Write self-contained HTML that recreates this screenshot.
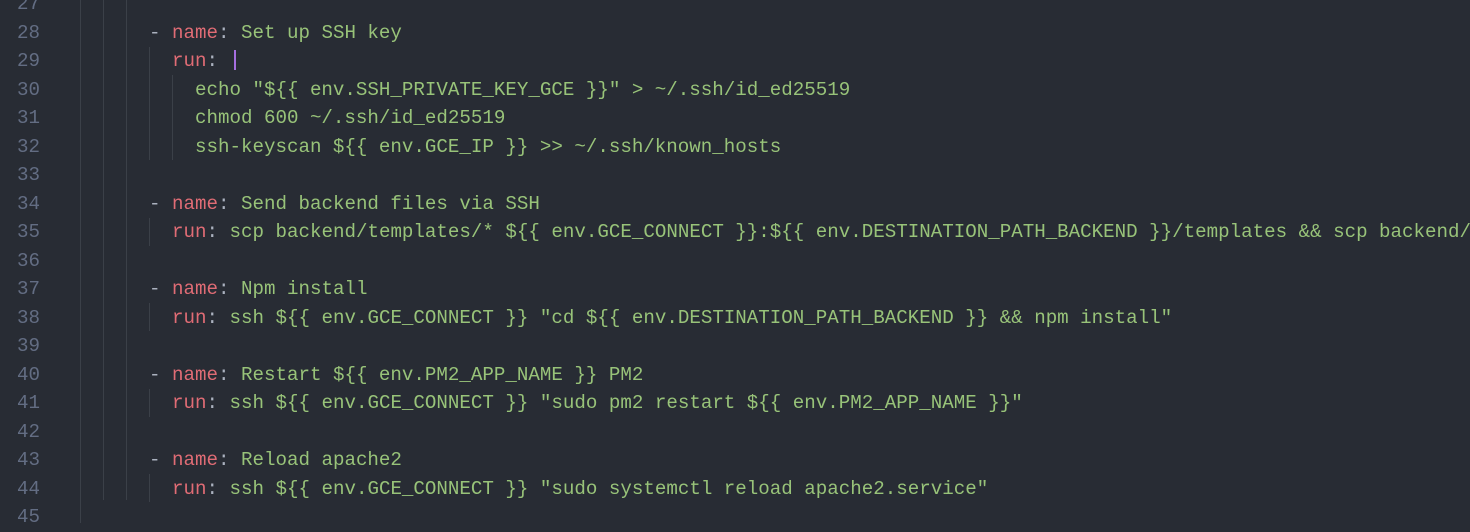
<!DOCTYPE html>
<html><head><style>
body{margin:0;width:1470px;height:523px;overflow:hidden;background:#282c34;font-family:"Liberation Mono",monospace;font-size:19.17px;}
.l{position:absolute;left:0;height:28.5px;line-height:28.5px;white-space:pre;width:1470px;}
.n{position:absolute;right:1430px;color:#636d83;text-align:right;}
.c{position:absolute;left:149px;color:#98c379;}
.k{color:#e06c75}.p{color:#abb2bf}.s{color:#98c379}
.g{position:absolute;width:1px;background:#3b4048;}
</style></head><body>
<div class="g" style="left:80px;top:0;height:523px"></div>
<div class="g" style="left:103px;top:0;height:500px"></div>
<div class="g" style="left:126px;top:0;height:500px"></div>
<div class="g" style="left:149px;top:47px;height:113px"></div>
<div class="g" style="left:172px;top:75px;height:85px"></div>
<div class="g" style="left:149px;top:218px;height:28px"></div>
<div class="g" style="left:149px;top:303px;height:28px"></div>
<div class="g" style="left:149px;top:389px;height:28px"></div>
<div class="g" style="left:149px;top:474px;height:28px"></div>
<div style="position:absolute;left:234px;top:50px;width:2px;height:20px;background:#a66ee0"></div>
<div id="x"></div>
<script>
var L=[
["27",""],
["28",'<span class="p">- </span><span class="k">name</span><span class="p">: </span>Set up SSH key'],
["29",'<span class="p">  </span><span class="k">run</span><span class="p">: </span>'],
["30",'    echo "${{ env.SSH_PRIVATE_KEY_GCE }}" &gt; ~/.ssh/id_ed25519'],
["31",'    chmod 600 ~/.ssh/id_ed25519'],
["32",'    ssh-keyscan ${{ env.GCE_IP }} &gt;&gt; ~/.ssh/known_hosts'],
["33",""],
["34",'<span class="p">- </span><span class="k">name</span><span class="p">: </span>Send backend files via SSH'],
["35",'  <span class="k">run</span><span class="p">: </span>scp backend/templates/* ${{ env.GCE_CONNECT }}:${{ env.DESTINATION_PATH_BACKEND }}/templates &amp;&amp; scp backend/'],
["36",""],
["37",'<span class="p">- </span><span class="k">name</span><span class="p">: </span>Npm install'],
["38",'  <span class="k">run</span><span class="p">: </span>ssh ${{ env.GCE_CONNECT }} "cd ${{ env.DESTINATION_PATH_BACKEND }} &amp;&amp; npm install"'],
["39",""],
["40",'<span class="p">- </span><span class="k">name</span><span class="p">: </span>Restart ${{ env.PM2_APP_NAME }} PM2'],
["41",'  <span class="k">run</span><span class="p">: </span>ssh ${{ env.GCE_CONNECT }} "sudo pm2 restart ${{ env.PM2_APP_NAME }}"'],
["42",""],
["43",'<span class="p">- </span><span class="k">name</span><span class="p">: </span>Reload apache2'],
["44",'  <span class="k">run</span><span class="p">: </span>ssh ${{ env.GCE_CONNECT }} "sudo systemctl reload apache2.service"'],
["45",""]];
var h="";
for(var i=0;i<L.length;i++){var t=-9.75+i*28.5;
h+='<div class="l" style="top:'+t+'px"><span class="n">'+L[i][0]+'</span><span class="c">'+L[i][1]+'</span></div>';}
document.getElementById("x").innerHTML=h;
</script>
</body></html>
